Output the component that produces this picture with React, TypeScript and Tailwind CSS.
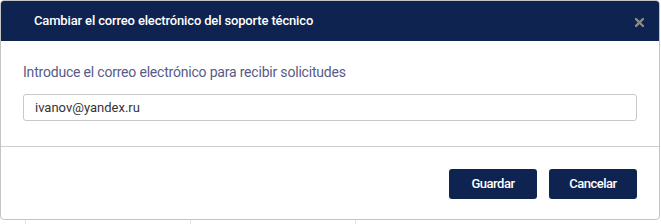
import React from "react";

export default function App() {
  return (
    <div className="w-[661px] h-[224px] bg-white relative overflow-hidden" style={{ fontFamily: "Roboto, 'Liberation Sans', sans-serif" }}>
      <div className="absolute left-0 top-[216px] w-full h-[8px] flex">
        <div className="ml-[25px] w-px h-full bg-[#e3e3e3]" />
        <div className="ml-[164px] w-px h-full bg-[#e3e3e3]" />
        <div className="ml-[164px] w-px h-full bg-[#e3e3e3]" />
      </div>
      <div className="relative w-[660px] h-[220px] border border-[#c4c4c4] rounded-[4px] bg-white flex flex-col overflow-hidden">
        <div className="h-[40px] bg-[#0e2350] flex items-center justify-between pl-[33px] pr-[15px] shrink-0">
          <span className="text-white text-[13px] font-medium tracking-[-0.15px]">Cambiar el correo electrónico del soporte técnico</span>
          <svg width="9" height="9" viewBox="0 0 9 9" className="mt-[3px]">
            <path d="M1 1 L8 8 M8 1 L1 8" stroke="#8a8a8a" strokeWidth="2.4" strokeLinecap="square" />
          </svg>
        </div>
        <div className="px-[22px] pt-[21px] pb-[25px] border-b border-[#cfcfcf]">
          <div className="text-[14px] text-[#575b88] leading-[20px] tracking-[-0.2px]">Introduce el correo electrónico para recibir solicitudes</div>
          <div className="mt-[12px] h-[27px] border border-[#c8c8c8] rounded-[3px] flex items-center px-[11px] text-[13px] text-[#333]">ivanov@yandex.ru</div>
        </div>
        <div className="flex justify-end gap-[12px] pr-[22px] pt-[22px]">
          <button className="w-[88px] h-[30px] bg-[#0e2350] rounded-[3px] text-white text-[13px] font-medium tracking-[-0.5px]">Guardar</button>
          <button className="w-[88px] h-[30px] bg-[#0e2350] rounded-[3px] text-white text-[13px] font-medium tracking-[-0.5px]">Cancelar</button>
        </div>
      </div>
    </div>
  );
}
